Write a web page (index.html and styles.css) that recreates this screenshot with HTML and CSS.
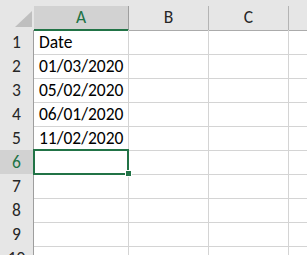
FILE: index.html
```
<html>
<head>
  <link rel="stylesheet" href="styles.css">
</head>
<body>
  <div class="sheet">
    <div class="row head">
      <div class="corner"><span class="corner_tri"></span></div>
      <div class="col-h col-h_sel">A</div>
      <div class="col-h">B</div>
      <div class="col-h">C</div>
      <div class="col-h col-h_last"></div>
    </div>
    <div class="row">
      <div class="row-h">1</div>
      <div class="cell">Date</div>
      <div class="cell"></div>
      <div class="cell"></div>
      <div class="cell cell_last"></div>
    </div>
    <div class="row">
      <div class="row-h">2</div>
      <div class="cell">01/03/2020</div>
      <div class="cell"></div>
      <div class="cell"></div>
      <div class="cell cell_last"></div>
    </div>
    <div class="row">
      <div class="row-h">3</div>
      <div class="cell">05/02/2020</div>
      <div class="cell"></div>
      <div class="cell"></div>
      <div class="cell cell_last"></div>
    </div>
    <div class="row">
      <div class="row-h">4</div>
      <div class="cell">06/01/2020</div>
      <div class="cell"></div>
      <div class="cell"></div>
      <div class="cell cell_last"></div>
    </div>
    <div class="row">
      <div class="row-h">5</div>
      <div class="cell">11/02/2020</div>
      <div class="cell"></div>
      <div class="cell"></div>
      <div class="cell cell_last"></div>
    </div>
    <div class="row">
      <div class="row-h row-h_sel">6</div>
      <div class="cell cell_active">
        <div class="selection"></div>
        <div class="fill-handle"></div>
      </div>
      <div class="cell"></div>
      <div class="cell"></div>
      <div class="cell cell_last"></div>
    </div>
    <div class="row">
      <div class="row-h">7</div>
      <div class="cell"></div>
      <div class="cell"></div>
      <div class="cell"></div>
      <div class="cell cell_last"></div>
    </div>
    <div class="row">
      <div class="row-h">8</div>
      <div class="cell"></div>
      <div class="cell"></div>
      <div class="cell"></div>
      <div class="cell cell_last"></div>
    </div>
    <div class="row">
      <div class="row-h">9</div>
      <div class="cell"></div>
      <div class="cell"></div>
      <div class="cell"></div>
      <div class="cell cell_last"></div>
    </div>
    <div class="row">
      <div class="row-h">10</div>
      <div class="cell"></div>
      <div class="cell"></div>
      <div class="cell"></div>
      <div class="cell cell_last"></div>
    </div>
  </div>
</body>
</html>
```

FILE: styles.css
```
html, body {
  margin: 0;
  background: #ffffff;
  overflow: hidden;
}
.sheet {
  width: 307px;
  height: 255px;
  overflow: hidden;
  font-family: Carlito, "Liberation Sans", Arial, sans-serif;
  font-size: 17.5px;
  color: #000000;
}
.row {
  display: grid;
  grid-template-columns: 34px 95px 80px 80px 1fr;
  height: 24px;
}
.head {
  height: 24px;
  padding-top: 6px;
  background: #e6e6e6;
}
.corner {
  display: flex;
  justify-content: flex-end;
  align-items: flex-end;
  padding: 0 2px 3px 0;
  border-bottom: 1px solid #ababab;
  box-sizing: border-box;
}
.corner_tri {
  width: 17px;
  height: 16px;
  background: #bfbfbf;
  clip-path: polygon(100% 0, 100% 100%, 0 100%);
}
.col-h {
  text-align: center;
  line-height: 23px;
  color: #262626;
  border-right: 1px solid #b4b4b4;
  border-bottom: 1px solid #ababab;
  box-sizing: border-box;
}
.col-h_sel {
  background: #d2d2d2;
  color: #217346;
  border-bottom: 2px solid #217346;
  border-right-color: #9e9e9e;
}
.col-h_last {
  border-right: none;
}
.row-h {
  text-align: center;
  line-height: 23px;
  padding-top: 1px;
  color: #262626;
  background: #e6e6e6;
  border-right: 1px solid #9e9e9e;
  border-bottom: 1px solid #c6c6c6;
  box-sizing: border-box;
}
.row-h_sel {
  background: #d2d2d2;
  color: #217346;
}
.cell {
  line-height: 23px;
  padding: 1px 0 0 5px;
  white-space: nowrap;
  border-right: 1px solid #d4d4d4;
  border-bottom: 1px solid #d4d4d4;
  box-sizing: border-box;
}
.cell_last {
  border-right: none;
}
.cell_active {
  position: relative;
}
.selection {
  position: absolute;
  top: -1px;
  left: -1px;
  right: -1px;
  bottom: -1px;
  border: 2px solid #217346;
}
.fill-handle {
  position: absolute;
  left: 91px;
  top: 20px;
  width: 5px;
  height: 5px;
  background: #217346;
  border: 1px solid #ffffff;
}
```
